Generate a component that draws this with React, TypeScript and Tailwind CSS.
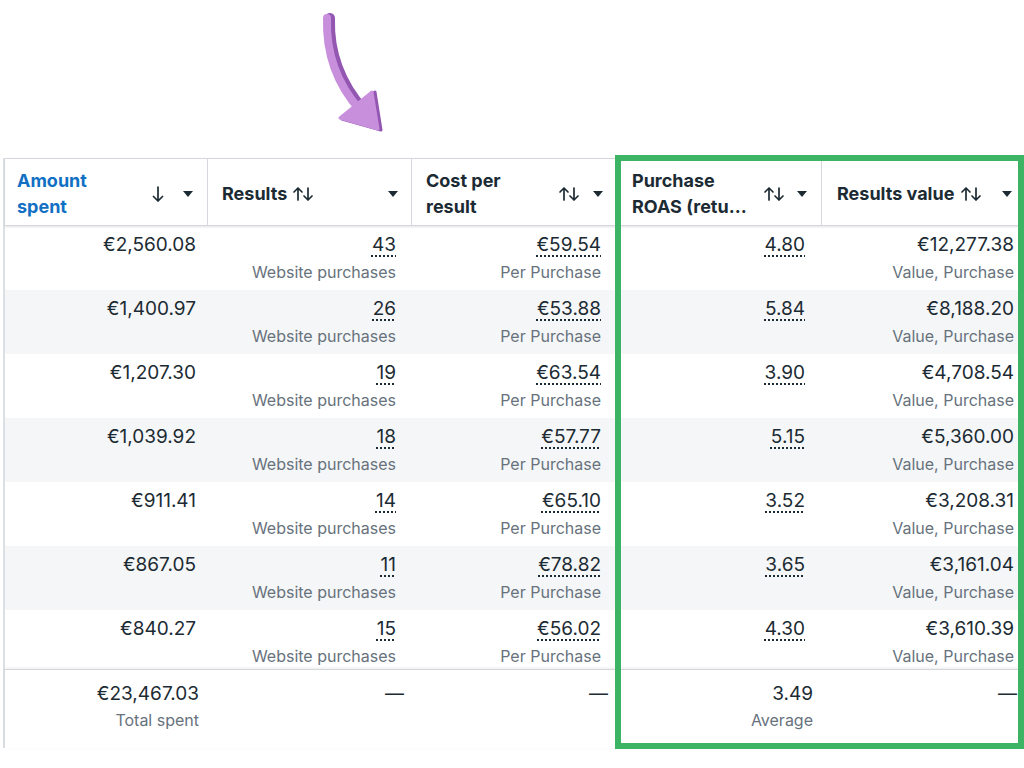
import React from "react";

const rows = [
  ["€2,560.08", "43", "€59.54", "4.80", "€12,277.38"],
  ["€1,400.97", "26", "€53.88", "5.84", "€8,188.20"],
  ["€1,207.30", "19", "€63.54", "3.90", "€4,708.54"],
  ["€1,039.92", "18", "€57.77", "5.15", "€5,360.00"],
  ["€911.41", "14", "€65.10", "3.52", "€3,208.31"],
  ["€867.05", "11", "€78.82", "3.65", "€3,161.04"],
  ["€840.27", "15", "€56.02", "4.30", "€3,610.39"],
];

const cols = "grid grid-cols-[203px_204px_204px_206px_207px]";

function SortBoth() {
  return (
    <svg width="22" height="16" viewBox="0 0 22 16" fill="none" stroke="#1c2b33" strokeWidth="1.7" strokeLinecap="round" strokeLinejoin="round">
      <path d="M6 14V2M2 6l4-4 4 4" />
      <path d="M16 2v12M12 10l4 4 4-4" />
    </svg>
  );
}

function SortDown() {
  return (
    <svg width="22" height="16" viewBox="0 0 22 16" fill="none" stroke="#1c2b33" strokeWidth="1.7" strokeLinecap="round" strokeLinejoin="round">
      <path d="M11 1v14M6.5 10.5L11 15l4.5-4.5" />
    </svg>
  );
}

function Caret() {
  return (
    <svg width="10" height="6" viewBox="0 0 10 6">
      <path d="M0 0h10L5 6z" fill="#1c2b33" />
    </svg>
  );
}

function CurvedArrow() {
  return (
    <svg width="80" height="125" viewBox="0 0 80 125" fill="none">
      <path d="M15 8 C14 40 24 72 49 100" stroke="#9357b2" strokeWidth="10" strokeLinecap="round" />
      <path d="M12 8 C11 40 20 72 45 100" stroke="#c88fdc" strokeWidth="8" strokeLinecap="round" />
      <path d="M27 109 L60 82 L66 120 Z" fill="#9357b2" stroke="#9357b2" strokeWidth="3" strokeLinejoin="round" />
      <path d="M25 108 L57 82 L63 119 Z" fill="#c88fdc" stroke="#c88fdc" strokeWidth="3" strokeLinejoin="round" />
    </svg>
  );
}

function Val({ v, dotted }: { v: string; dotted?: boolean }) {
  return (
    <div
      className={
        "text-[19px] leading-[24px] text-[#1c2b33] " +
        (dotted ? "underline decoration-dotted decoration-[1.5px] underline-offset-[4px] decoration-[#1c2b33]" : "")
      }
    >
      {v}
    </div>
  );
}

function Sub({ t }: { t: string }) {
  return <div className="mt-[4px] text-[16px] leading-[22px] text-[#67727d]">{t}</div>;
}

export default function App() {
  return (
    <div className="relative w-[1024px] h-[768px] overflow-hidden bg-white font-['Inter',sans-serif]">
      <div className="h-[158px] pl-[315px] pt-[10px]">
        <CurvedArrow />
      </div>

      <div className="ml-[3px] border-l-2 border-[#dcdfe3] w-[1030px]">
        {/* Header */}
        <div className={cols + " relative z-10 h-[68px] border-t border-b border-[#d4d7db] bg-white shadow-[0_1px_2px_rgba(0,0,0,0.12)]"}>
          <div className="flex items-center pt-[3px] pl-[12px] pr-[14px] border-r border-[#d4d7db]">
            <div className="flex-1 text-[18px] font-bold leading-[26px] text-[#1170c4]">
              <div>Amount</div>
              <div>spent</div>
            </div>
            <SortDown />
            <div className="ml-[14px]"><Caret /></div>
          </div>
          <div className="flex items-center pt-[3px] pl-[14px] pr-[13px] border-r border-[#d4d7db]">
            <div className="text-[18px] font-bold leading-[26px] text-[#1c2b33]">Results</div>
            <div className="ml-[5px]"><SortBoth /></div>
            <div className="ml-auto"><Caret /></div>
          </div>
          <div className="flex items-center pt-[3px] pl-[14px] pr-[12px] border-r border-[#d4d7db]">
            <div className="flex-1 text-[18px] font-bold leading-[26px] text-[#1c2b33]">
              <div>Cost per</div>
              <div>result</div>
            </div>
            <SortBoth />
            <div className="ml-[13px]"><Caret /></div>
          </div>
          <div className="flex items-center pt-[3px] pl-[16px] pr-[14px] border-r border-[#d4d7db]">
            <div className="flex-1 text-[18px] font-bold leading-[26px] text-[#1c2b33] whitespace-nowrap">
              <div>Purchase</div>
              <div>ROAS (retu...</div>
            </div>
            <SortBoth />
            <div className="ml-[12px]"><Caret /></div>
          </div>
          <div className="flex items-center pt-[3px] pl-[15px] pr-[17px]">
            <div className="text-[18px] font-bold leading-[26px] text-[#1c2b33] whitespace-nowrap">Results value</div>
            <div className="ml-[6px]"><SortBoth /></div>
            <div className="ml-auto"><Caret /></div>
          </div>
        </div>

        {/* Body */}
        <div className="h-[443px] overflow-hidden">
          {rows.map((r, i) => (
            <div key={i} className={cols + " h-[64px] " + (i % 2 === 1 ? "bg-[#f5f6f7]" : "bg-white")}>
              <div className="flex flex-col items-end pt-[7px] pr-[12px]">
                <Val v={r[0]} />
              </div>
              <div className="flex flex-col items-end pt-[7px] pr-[16px]">
                <Val v={r[1]} dotted />
                <Sub t="Website purchases" />
              </div>
              <div className="flex flex-col items-end pt-[7px] pr-[15px]">
                <Val v={r[2]} dotted />
                <Sub t="Per Purchase" />
              </div>
              <div className="flex flex-col items-end pt-[7px] pr-[17px]">
                <Val v={r[3]} dotted />
              </div>
              <div className="flex flex-col items-end pt-[7px] pr-[15px]">
                <Val v={r[4]} />
                <Sub t="Value, Purchase" />
              </div>
            </div>
          ))}
        </div>

        {/* Footer */}
        <div className={cols + " relative z-10 h-[79px] border-t border-[#d4d7db] bg-white shadow-[0_-1px_3px_rgba(0,0,0,0.08)]"}>
          <div className="flex flex-col items-end pt-[12px] pr-[9px]">
            <Val v="€23,467.03" />
            <div className="mt-[3px] text-[16px] leading-[22px] text-[#67727d]">Total spent</div>
          </div>
          <div className="flex flex-col items-end pt-[12px] pr-[8px]">
            <Val v="—" />
          </div>
          <div className="flex flex-col items-end pt-[12px] pr-[8px]">
            <Val v="—" />
          </div>
          <div className="flex flex-col items-end pt-[12px] pr-[9px]">
            <Val v="3.49" />
            <div className="mt-[3px] text-[16px] leading-[22px] text-[#67727d]">Average</div>
          </div>
          <div className="flex flex-col items-end pt-[12px] pr-[12px]">
            <Val v="—" />
          </div>
        </div>
      </div>

      {/* Highlight box */}
      <div className="absolute z-20 left-[615px] top-[155px] w-[409px] h-[594px] border-[6px] border-[#3cb464] pointer-events-none" />
    </div>
  );
}
